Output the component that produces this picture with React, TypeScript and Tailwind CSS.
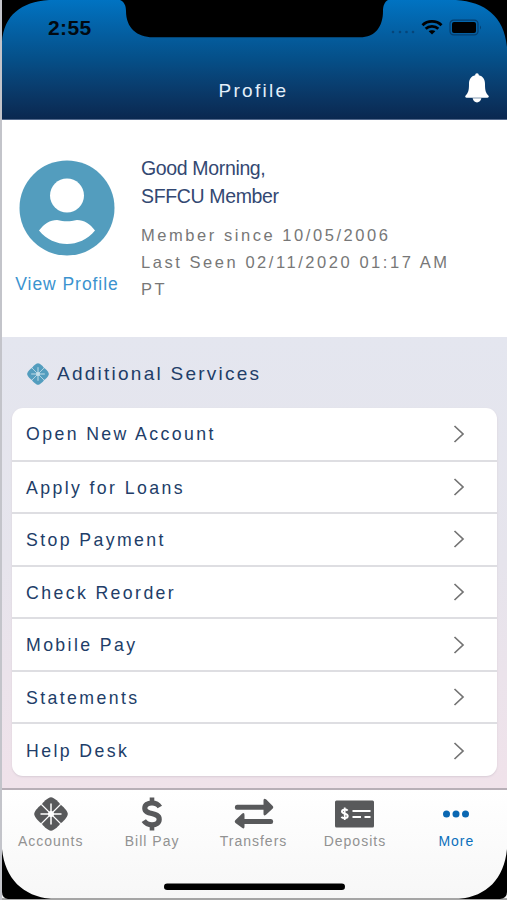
import type { ReactNode } from "react";

const services = [
  "Open New Account",
  "Apply for Loans",
  "Stop Payment",
  "Check Reorder",
  "Mobile Pay",
  "Statements",
  "Help Desk",
];

function Flower({ className, line }: { className: string; line: string }) {
  return (
    <svg viewBox="-17 -17 34 34" className={className} aria-hidden>
      {[0, 90, 180, 270].map((angle) => (
        <path
          key={angle}
          transform={`rotate(${angle})`}
          d="M0 0L-9.300 -9.300C-9 -11 -3 -16.8 0 -16.8C3 -16.8 9 -11 9.300 -9.300Z"
          fill="currentColor"
        />
      ))}
      <path d="M0 -10.500V10.500M-10.500 0H10.500" stroke={line} strokeWidth="1.5" />
      <path d="M-9.500 -9.500L9.500 9.500M9.500 -9.500L-9.500 9.500" stroke={line} strokeWidth="1.1" />
      <circle r="3" fill={line} />
    </svg>
  );
}

function StatusIcons() {
  return (
    <svg viewBox="0 0 100 20" className="h-5 w-[100px]" aria-hidden>
      <g fill="#06457a">
        <circle cx="5" cy="15" r="1.3" />
        <circle cx="12" cy="15" r="1.3" />
        <circle cx="18.5" cy="15" r="1.3" />
        <circle cx="25" cy="15" r="1.3" />
      </g>
      <g fill="none" stroke="#000" strokeWidth="2.8">
        <path d="M34.500 8.2C39.500 3.200 48.500 3.200 53.500 8.2" />
        <path d="M37.700 11.8C41 8.600 47 8.600 50.300 11.8" />
      </g>
      <path d="M40.700 14.200C42.300 12.800 45.700 12.800 47.300 14.200L44 17.5Z" />
      <rect x="62" y="3.2" width="28" height="14.6" rx="3.6" fill="none" stroke="#053f70" strokeWidth="1.2" />
      <rect x="64" y="5" width="24" height="11" rx="2" />
      <path d="M92 8.5Q94 10.5 92 12.5Z" fill="#053f70" />
    </svg>
  );
}

function Bell() {
  return (
    <svg viewBox="0 0 24 30" className="-mt-1 h-[30px] w-6" fill="#fff" aria-hidden>
      <path d="M12 .3C13.2 .3 13.8 1.2 13.8 2.3C18 3.2 20 6.5 20 11C20 17.5 20.7 19.8 23.3 22.4C24.2 23.5 23.8 24.7 22.5 24.7H1.5C.2 24.7 -.2 23.5 .7 22.4C3.3 19.8 4 17.5 4 11C4 6.5 6 3.2 10.2 2.3C10.2 1.2 10.8 .3 12 .3Z" />
      <path d="M7.6 25.3H16.4C15.8 28 14.2 29.4 12 29.4C9.8 29.4 8.2 28 7.6 25.3Z" />
    </svg>
  );
}

function Avatar() {
  return (
    <svg viewBox="0 0 96 96" className="size-24" aria-hidden>
      <circle cx="48" cy="48" r="47.5" fill="#539dbe" />
      <circle cx="48" cy="35.5" r="17" fill="#fff" />
      <path
        d="M20 70.5C25 64 31 60 38 60C42 60.8 44.5 61.3 48 61.3C51.5 61.3 54 60.8 58 60C65 60 71 64 76 70.5C61 88.5 35 88.5 20 70.5Z"
        fill="#fff"
      />
    </svg>
  );
}

function Dollar() {
  return (
    <svg viewBox="0 0 22 34" className="h-[34px] w-[22px]" fill="none" stroke="#58595b" aria-hidden>
      <path d="M11 .5V6M11 28V33.5" strokeWidth="4.6" />
      <path
        d="M18.800 10C17 7 14 6 11 6C6.5 6 3.800 8 3.800 11.2C3.800 18.5 18.2 14.5 18.2 22.2C18.2 26 15.3 27.800 11 27.800C7.3 27.800 4.8 26.600 2.8 23.600"
        strokeWidth="5.2"
      />
    </svg>
  );
}

function Transfer() {
  return (
    <svg viewBox="0 0 40 32" className="h-8 w-10" fill="#58595b" aria-hidden>
      <path d="M3 6.700H29.500V2.5Q29.500 -.5 32 1.3L38.5 7.700Q40 9.2 38.5 10.700L32 16.800Q29.500 18.500 29.500 15.700V11.700H3Q.8 11.700 .8 9.2Q.8 6.700 3 6.700Z" />
      <path d="M37 26H10.500V28.500Q10.500 31.500 8 29.700L1.5 25Q0 23.500 1.5 22L8 15.700Q10.500 14 10.500 17V21H37Q39.200 21 39.200 23.5Q39.200 26 37 26Z" />
    </svg>
  );
}

function Check() {
  return (
    <svg viewBox="0 0 39 28" className="h-7 w-[39px]" fill="none" stroke="#fff" aria-hidden>
      <rect y=".5" width="39" height="27" rx="1.5" fill="#58595b" stroke="none" />
      <path d="M9.7 7.5V20" strokeWidth="1.8" />
      <path d="M12.6 10.6C11.5 9.3 7 9 7 11.6C7 14.2 12.7 13 12.7 16C12.7 18.7 7.7 18.5 6.4 16.8" strokeWidth="2" />
      <path d="M17.5 11H35.5M17.5 17H26M29.5 17H35.5" strokeWidth="2.2" />
    </svg>
  );
}

function Dots() {
  return (
    <svg viewBox="0 0 28 8" className="h-2 w-7" fill="#0a67b2" aria-hidden>
      <circle cx="4.5" cy="4" r="3.5" />
      <circle cx="14" cy="4" r="3.5" />
      <circle cx="23.5" cy="4" r="3.5" />
    </svg>
  );
}

function Tab({ label, active, children }: { label: string; active?: boolean; children: ReactNode }) {
  return (
    <button className="flex w-[101.5px] flex-col items-center">
      <span className="flex h-[34px] items-center justify-center">{children}</span>
      <span
        className={
          active
            ? "mt-px text-[14px] leading-[18px] tracking-[1px] text-[#0b70bc]"
            : "mt-px text-[14px] leading-[18px] tracking-[1px] text-[#929292]"
        }
      >
        {label}
      </span>
    </button>
  );
}

// Device cutout and rounded screen corners
function PhoneFrame() {
  return (
    <svg viewBox="0 0 507 900" className="pointer-events-none absolute inset-0 h-[900px] w-[507px]" aria-hidden>
      <path d="M120 0C124.500 2 126 6 126 11C126 28 137 37.300 153 37.300H360C375 37.300 383 27 383 11C383 6 384.500 2 388 0Z" />
      <path d="M2 0H49C21 2 4 15 2 42Z" />
      <path d="M507 0H456C485 2 504 16 507 47Z" />
      <path d="M2 849C5 879 23 896 51 899H8Q2 898 2 892Z" />
      <path d="M507 849C504 879 487 896 459 899H500Q507 898 507 892Z" />
      <rect x="164" y="883.500" width="181" height="6.500" rx="3.200" />
    </svg>
  );
}

export default function App() {
  return (
    <main className="relative flex h-[900px] w-[507px] flex-col overflow-hidden border-l-2 border-[#c3c4ca] bg-white font-['Liberation_Sans',Arial,sans-serif]">
      <header className="h-[120px] shrink-0 border-b border-[#53698c] bg-linear-to-b from-[#0073c2] via-[#054f88] to-[#0a2850]">
        <div className="flex h-14 items-start justify-between pl-[46px] pr-[19px] pt-[17px]">
          <span className="text-[21px] font-bold leading-[22px] tracking-[0.4px] text-[#020910]">2:55</span>
          <StatusIcons />
        </div>
        <div className="grid grid-cols-[1fr_auto_1fr] items-center pr-[18px] pt-[17px]">
          <h1 className="col-start-2 pl-4 pt-0.5 text-[19px] leading-[32px] tracking-[2.3px] text-[#e3effa]">Profile</h1>
          <span className="flex justify-end">
            <Bell />
          </span>
        </div>
      </header>

      <section className="flex h-[217px] shrink-0 pt-10">
        <div className="flex w-[130px] flex-col items-center">
          <Avatar />
          <a className="mt-[17px] text-[17.5px] leading-[22px] tracking-[0.95px] text-[#3b93cf]">View Profile</a>
        </div>
        <div className="ml-[9px] w-[330px] -mt-[6px]">
          <p className="text-[19.500px] leading-[28px] tracking-[-0.35px] text-[#334872]">
            Good Morning,
            <br />
            SFFCU Member
          </p>
          <p className="mt-[12px] text-[16.500px] leading-[27px] tracking-[2.550px] text-[#777]">
            Member since 10/05/2006
            <br />
            Last Seen 02/11/2020 01:17 AM PT
          </p>
        </div>
      </section>

      <section className="h-[451px] shrink-0 bg-linear-to-b from-[#e4e6ef] via-[#e6e4ec] to-[#f0e2ea] px-[10px]">
        <h2 className="flex h-[71px] items-center gap-2 pl-[15px] pt-[2px] text-[19px] tracking-[2.250px] text-[#213d68]">
          <Flower className="size-[22px] text-[#539dbe]" line="#c5dfea" />
          <span className="pt-0.5">Additional Services</span>
        </h2>
        <ul className="h-[368px] overflow-hidden rounded-[11px] bg-white shadow-[0_1px_2px_#d8ccd6]">
          {services.map((name) => (
            <li
              key={name}
              className="flex h-[52.6px] items-center justify-between border-b-2 border-[#dedee2] pl-[14px] pr-[32px] text-[17.700px] tracking-[2.400px] text-[#213d68] first:h-[53.5px] last:border-b-0"
            >
              <span className="pt-[2px]">{name}</span>
              <svg viewBox="0 0 12 18" className="h-[18px] w-3" fill="none" stroke="#737373" strokeWidth="1.7" aria-hidden>
                <path d="M1.500 1L10 9L1.500 17" />
              </svg>
            </li>
          ))}
        </ul>
      </section>

      <nav className="flex h-28 shrink-0 items-start border-b-2 border-t-2 border-b-[#a5a5a5] border-t-[#b8afb7] bg-linear-to-b from-white to-[#f7f7f7] pt-[7px] -ml-[2px]">
        <Tab label="Accounts">
          <Flower className="size-[34px] text-[#58595b]" line="#fff" />
        </Tab>
        <Tab label="Bill Pay">
          <Dollar />
        </Tab>
        <Tab label="Transfers">
          <Transfer />
        </Tab>
        <Tab label="Deposits">
          <Check />
        </Tab>
        <Tab label="More" active>
          <Dots />
        </Tab>
      </nav>

      <div className="absolute -left-0.5 top-0">
        <PhoneFrame />
      </div>
    </main>
  );
}
